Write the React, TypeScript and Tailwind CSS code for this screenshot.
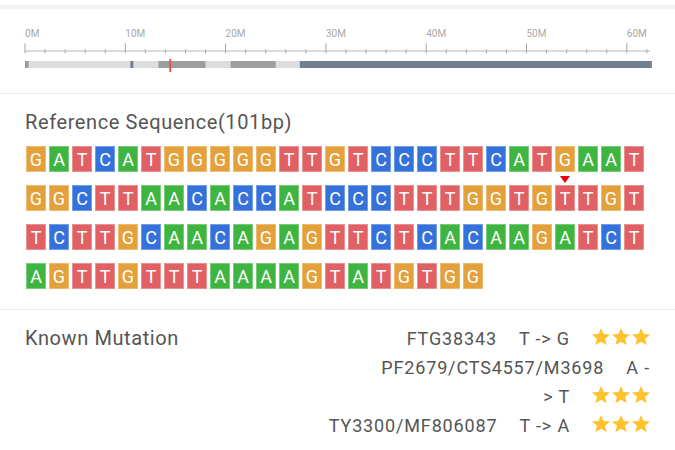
import React from "react";

const SEQ =
  "GATCATGGGGGTTGTCCCTTCATGAAT" +
  "GGCTTAACACCATCCCTTTGGTGTTGT" +
  "TCTTGCAACAGAGTTCTCACAAGATCT" +
  "AGTTGTTTAAAAGTATGTGG";

const MARK_AT = 50;

const BASE_BG: Record<string, string> = {
  A: "bg-[#3fb541]",
  C: "bg-[#3571db]",
  G: "bg-[#e4a03a]",
  T: "bg-[#e06064]",
};

const mutations = [
  { id: "FTG38343", change: "T -> G", stars: 3 },
  { id: "PF2679/CTS4557/M3698", change: "A -> T", stars: 3 },
  { id: "TY3300/MF806087", change: "T -> A", stars: 3 },
];

// chromosome band segments, in Mb
const bands = [
  { from: 0, to: 0.35, color: "#9a9a9a" },
  { from: 10.5, to: 10.8, color: "#708090" },
  { from: 13.3, to: 18, color: "#9e9e9e" },
  { from: 20.5, to: 25, color: "#9e9e9e" },
  { from: 27.4, to: 62.5, color: "#708090" },
];

const px = (mb: number) => 25 + mb * 10.03;

const Ideogram = () => {
  const minor = Array.from({ length: 32 }, (_, i) => i * 2);
  return (
    <svg width="675" height="84" className="block">
      {[0, 10, 20, 30, 40, 50, 60].map((v) => (
        <text
          key={v}
          x={px(v)}
          y="27.7"
          fontSize="10"
          fill="#a8a8a8"
          fontFamily="Roboto, sans-serif"
        >
          {v}M
        </text>
      ))}
      <line x1="25" y1="42" x2="650" y2="42" stroke="#b5b5b5" strokeWidth="1" />
      {minor.map((v) => {
        const major = v % 10 === 0;
        return (
          <line
            key={v}
            x1={px(v)}
            x2={px(v)}
            y1={major ? 34.3 : 40.3}
            y2="44.3"
            stroke="#a5a5a5"
            strokeWidth="1"
          />
        );
      })}
      <rect x="25" y="52" width="625" height="7" fill="#dddddd" />
      {bands.map((b, i) => (
        <rect key={i} x={px(b.from)} y="52" width={px(b.to) - px(b.from)} height="7" fill={b.color} />
      ))}
      <rect x="169.3" y="50" width="1.8" height="13" fill="#ee4b4b" />
    </svg>
  );
};

const Stars = ({ count }: { count: number }) => (
  <svg width="58" height="18" viewBox="0 0 58 18" className="ml-[22px] inline-block align-[-1px]">
    {Array.from({ length: count }, (_, i) => (
      <path
        key={i}
        transform={`translate(${i * 20 - 1.8} -1.8) scale(0.9)`}
        d="M12 17.27L18.18 21l-1.64-7.03L22 9.24l-7.19-.61L12 2 9.19 8.63 2 9.24l5.46 4.73L5.82 21z"
        fill="#fdc22c"
      />
    ))}
  </svg>
);

const MutationLine = ({ id, change, stars }: { id: string; change: string; stars: number }) => {
  // the arrow may break after its dash, as the app does
  const [head, tail] = change.split("->");
  return (
    <p>
      <span>{id}</span>
      <span className="ml-[22px]">
        {head}-<wbr />
      </span>
      <span className="whitespace-nowrap">
        {">" + tail}
        <Stars count={stars} />
      </span>
    </p>
  );
};

export default function App() {
  return (
    <div className="h-[450px] w-[675px] overflow-hidden bg-white font-['Roboto',sans-serif] text-[#555]">
      <div className="pt-[5px]">
        <div className="h-[4px] bg-[#f2f2f2]" />
      </div>
      <Ideogram />
      <div className="h-px bg-[#eeeeee]" />

      {/* Sequence */}
      <section className="pb-[20px] pl-[25px] pt-[16px]">
        <h2 className="text-[20px] leading-[24px] tracking-[0.6px]">Reference Sequence(101bp)</h2>
        <div className="ml-[1px] mt-[12px] flex w-[618px] flex-wrap gap-x-[3px] gap-y-[13px]">
          {SEQ.split("").map((b, i) => (
            <div
              key={i}
              className={`relative flex h-[26px] w-[20px] items-center justify-center border border-white/30 text-[18px] text-white ${BASE_BG[b]}`}
            >
              {b}
              {i === MARK_AT && (
                <span className="absolute left-[4px] top-[-10px] h-0 w-0 border-l-[5px] border-r-[5px] border-t-[7px] border-l-transparent border-r-transparent border-t-[#e8000e]" />
              )}
            </div>
          ))}
        </div>
      </section>
      <div className="h-px bg-[#eeeeee]" />

      {/* Known mutations */}
      <section className="flex justify-between pl-[25px] pr-[25px] pt-[14px]">
        <h2 className="text-[20px] leading-[29px] tracking-[0.6px]">Known Mutation</h2>
        <div className="w-[345px] text-right text-[18px] leading-[29px] tracking-[0.85px] text-[#555]">
          {mutations.map((m) => (
            <MutationLine key={m.id} {...m} />
          ))}
        </div>
      </section>
    </div>
  );
}
